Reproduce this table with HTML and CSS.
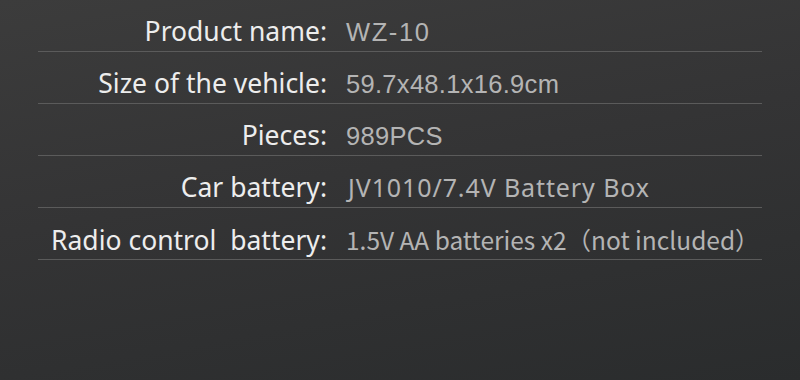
FILE: index.html
```html
<!DOCTYPE html>
<html lang="en">
<head>
  <meta charset="UTF-8">
  <title>Specifications</title>
  <link rel="stylesheet" href="styles.css">
</head>
<body>
  <div class="spec-box">
    <div class="spec-row">
      <div class="spec-row__label">Product name:</div>
      <div class="spec-row__value spec-row__value--plain spec-row__value--wide">WZ-10</div>
    </div>
    <div class="spec-row">
      <div class="spec-row__label">Size of the vehicle:</div>
      <div class="spec-row__value spec-row__value--plain">59.7x48.1x16.9cm</div>
    </div>
    <div class="spec-row">
      <div class="spec-row__label">Pieces:</div>
      <div class="spec-row__value spec-row__value--plain">989PCS</div>
    </div>
    <div class="spec-row">
      <div class="spec-row__label">Car battery:</div>
      <div class="spec-row__value spec-row__value--spaced">JV1010/7.4V Battery Box</div>
    </div>
    <div class="spec-row">
      <div class="spec-row__label">Radio control&nbsp; battery:</div>
      <div class="spec-row__value spec-row__value--cjk">1.5V AA batteries x2（not included）</div>
    </div>
  </div>
</body>
</html>
```

FILE: styles.css
```css
/* Page */
body {
  margin: 0;
  width: 800px;
  height: 380px;
  background: linear-gradient(170deg, #3c3c3c 0%, #343435 45%, #2a2c2d 100%);
  font-family: "Noto Sans", "Noto Sans CJK SC", sans-serif;
  overflow: hidden;
}

.spec-box {
  margin: 0 38px;
}

.spec-row {
  display: flex;
  align-items: baseline;
  height: 39px;
  padding-top: 12px;
  line-height: 39px;
  border-bottom: 1.5px solid #5b5b5b;
}

.spec-row__label {
  width: 289px;
  flex: 0 0 289px;
  text-align: right;
  color: #ededed;
  font-size: 26.5px;
  white-space: nowrap;
}

.spec-row__value {
  padding-left: 19px;
  color: #b4b4b4;
  font-size: 25px;
  white-space: nowrap;
}

/* first rows were typeset in a plain grotesk */
.spec-row__value--plain {
  font-family: "Liberation Sans", Arial, sans-serif;
  font-size: 25.5px;
  letter-spacing: 0.3px;
}

.spec-row__value--wide {
  letter-spacing: 1.6px;
}

.spec-row__value--spaced {
  letter-spacing: 0.9px;
  padding-left: 21px;
}

.spec-row__value--cjk {
  font-family: "Noto Sans CJK SC", "Noto Sans", sans-serif;
  font-size: 24.5px;
}
```
